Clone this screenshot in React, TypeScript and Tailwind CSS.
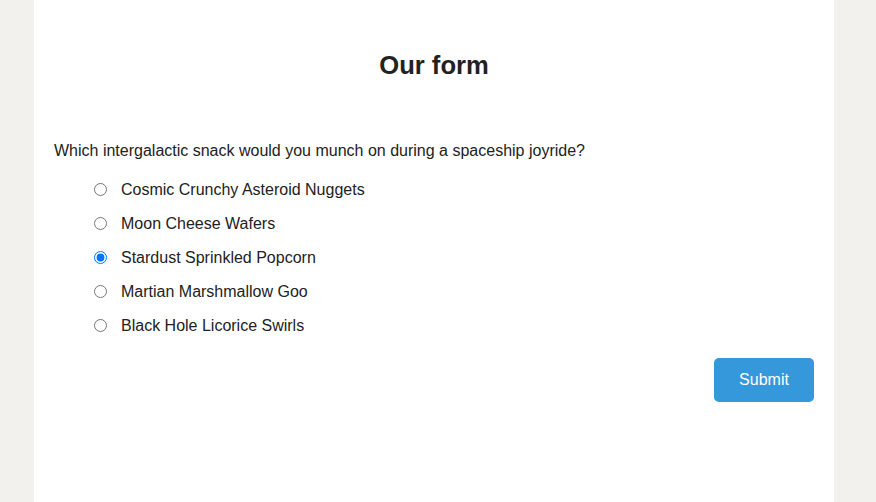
const options = [
  "Cosmic Crunchy Asteroid Nuggets",
  "Moon Cheese Wafers",
  "Stardust Sprinkled Popcorn",
  "Martian Marshmallow Goo",
  "Black Hole Licorice Swirls",
];

export default function App() {
  return (
    <div
      className="min-h-screen bg-[#f2f1ed] text-[#222] flex"
      style={{ fontFamily: '"Liberation Sans", Arial, sans-serif' }}
    >
      <div className="ml-[34px] w-[800px] min-h-[502px] bg-white px-5 pt-[50px]">
        <h1 className="text-center text-[25.6px] font-bold leading-[30px]">
          Our form
        </h1>
        <form className="mt-[59px]" onSubmit={(e) => e.preventDefault()}>
          <p className="text-base leading-6">
            Which intergalactic snack would you munch on during a spaceship joyride?
          </p>
          <div className="mt-[9px] pl-10">
            {options.map((opt, i) => (
              <label key={opt} className="flex items-center h-[34px] text-base">
                <input
                  type="radio"
                  name="snack"
                  defaultChecked={i === 2}
                  className="w-[13px] h-[13px]"
                />
                <span className="ml-[14px] pt-[2px]">{opt}</span>
              </label>
            ))}
          </div>
          <div className="flex justify-end mt-4">
            <button
              type="submit"
              className="w-[100px] h-[44px] rounded-[5px] bg-[#3498db] text-white text-base"
            >
              Submit
            </button>
          </div>
        </form>
      </div>
    </div>
  );
}
